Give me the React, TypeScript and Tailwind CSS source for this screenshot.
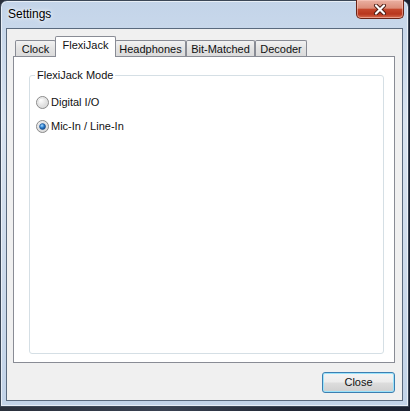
import React from 'react';

const tabs = [
  { label: 'Clock', w: 'w-[41px]', ml: '' },
  { label: 'FlexiJack', w: 'w-[61px]', ml: '-ml-px', active: true },
  { label: 'Headphones', w: 'w-[71px]', ml: '-ml-px' },
  { label: 'Bit-Matched', w: 'w-[69px]', ml: '' },
  { label: 'Decoder', w: 'w-[52px]', ml: '' },
];

const Radio: React.FC<{ checked?: boolean }> = ({ checked }) => (
  <svg width="13" height="13" viewBox="0 0 13 13" className="shrink-0">
    <defs>
      <radialGradient id={checked ? 'rgOn' : 'rgOff'} cx="0.35" cy="0.3" r="0.8">
        <stop offset="0" stopColor="#ffffff" />
        <stop offset="1" stopColor="#cfcfcf" />
      </radialGradient>
      <radialGradient id="dot" cx="0.4" cy="0.35" r="0.7">
        <stop offset="0" stopColor="#a9dcff" />
        <stop offset="0.5" stopColor="#2c7fd0" />
        <stop offset="1" stopColor="#0d3f7c" />
      </radialGradient>
    </defs>
    <circle cx="6.5" cy="6.5" r="6" fill={`url(#${checked ? 'rgOn' : 'rgOff'})`} stroke="#8a8a8a" strokeWidth="1" />
    <circle cx="6.5" cy="6.5" r="4.5" fill="none" stroke="#e2e2e2" strokeWidth="1" />
    {checked && <circle cx="6.5" cy="6.5" r="3" fill="url(#dot)" stroke="#1c4f8c" strokeWidth="0.6" />}
  </svg>
);

const App: React.FC = () => {
  return (
    <div className="w-[410px] h-[411px] overflow-hidden bg-[linear-gradient(90deg,#2a303c,#3a4252_40%,#222836_70%,#1a2030)] font-['Liberation_Sans',Arial,sans-serif] text-[#111]">
      {/* Window frame */}
      <div className="w-[409px] h-[407px] flex flex-col rounded-t-[7px] border border-[#3b4757] bg-[linear-gradient(180deg,#c3d4e9_0%,#d8e3f0_30%,#cfdcec_60%,#c2d3e8_100%)] shadow-[inset_0_0_0_1px_rgba(255,255,255,0.6)]">
        {/* Title bar */}
        <div className="h-[27px] flex items-start justify-between">
          <span className="pl-[7px] pt-[6px] text-[12px] leading-[14px] text-black [text-shadow:0_0_6px_#ffffff,0_0_3px_#ffffff]">
            Settings
          </span>
          <div className="-mt-px mr-[4px] w-[48px] h-[19px] flex items-center justify-center rounded-b-[5px] border border-t-0 border-[#6a2417] bg-[linear-gradient(180deg,#eab0a2_0%,#dc8d79_45%,#c4472c_52%,#b8361d_78%,#d66d50_100%)] shadow-[inset_0_0_0_1px_rgba(255,210,200,0.5)]">
            <svg width="14" height="11" viewBox="0 0 14 11">
              <path d="M3 1.5 L11 9.5 M11 1.5 L3 9.5" stroke="#4a1b12" strokeWidth="4" strokeLinecap="round" />
              <path d="M3 1.5 L11 9.5 M11 1.5 L3 9.5" stroke="#ffffff" strokeWidth="2.2" strokeLinecap="round" />
            </svg>
          </div>
        </div>

        {/* Client area */}
        <div className="mx-[5px] mb-[5px] flex-1 border border-[#5a6a7e] bg-[#f0f0f0] flex flex-col pt-[7px] pl-[6px] pr-[7px] pb-[7px] text-[11px]">
          {/* Tabs */}
          <div className="h-[20px] flex items-end pl-[2px]">
            {tabs.map((t) =>
              t.active ? (
                <div
                  key={t.label}
                  className={`${t.w} ${t.ml} relative z-10 h-[21px] -mb-px flex justify-center pt-[2px] leading-[13px] bg-white border border-b-0 border-[#898c95] rounded-t-[2px]`}
                >
                  {t.label}
                </div>
              ) : (
                <div
                  key={t.label}
                  className={`${t.w} ${t.ml} h-[16px] flex items-center justify-center leading-[13px] pt-[1px] border border-b-0 border-[#898c95] bg-[linear-gradient(180deg,#f2f2f2,#e3e3e3_50%,#dbdbdb)] rounded-t-[2px]`}
                >
                  {t.label}
                </div>
              )
            )}
          </div>

          {/* Panel */}
          <div className="h-[307px] border border-[#898c95] bg-white pt-[11px] pl-[15px] pr-[10px] pb-[8px] flex flex-col">
            <fieldset className="flex-1 border border-[#d5dfe5] rounded-[3px]">
              <legend className="ml-[5px] px-[2px] leading-[14px]">FlexiJack Mode</legend>
              <div className="mt-[14px] pl-[6px] flex flex-col gap-[11px]">
                <label className="h-[13px] flex items-center leading-[13px]">
                  <Radio />
                  <span className="ml-[2px]">Digital I/O</span>
                </label>
                <label className="h-[13px] flex items-center leading-[13px]">
                  <Radio checked />
                  <span className="ml-[2px]">Mic-In / Line-In</span>
                </label>
              </div>
            </fieldset>
          </div>

          {/* Buttons */}
          <div className="mt-[9px] flex justify-end">
            <button className="w-[73px] h-[21px] rounded-[3px] border border-[#3c7fb1] shadow-[inset_0_0_0_1px_#9be3fb] bg-[linear-gradient(180deg,#f4f4f4_0%,#ececec_48%,#dddddd_52%,#cfcfcf_100%)] text-[11px] leading-[13px]">
              Close
            </button>
          </div>
        </div>
      </div>
    </div>
  );
};

export default App;
